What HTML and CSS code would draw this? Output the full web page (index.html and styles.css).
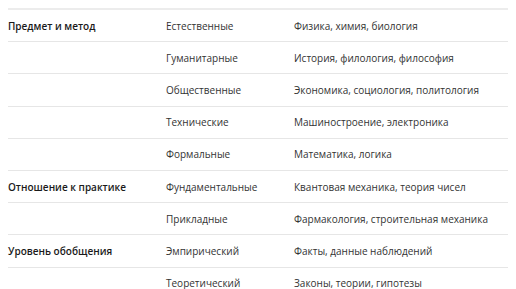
FILE: index.html
```html
<!DOCTYPE html>
<html lang="ru">
<head>
<meta charset="utf-8">
<link rel="stylesheet" href="styles.css">
</head>
<body>
<table class="sci">
  <tbody>
    <tr><th>Предмет и метод</th><td>Естественные</td><td>Физика, химия, биология</td></tr>
    <tr><th></th><td>Гуманитарные</td><td>История, филология, философия</td></tr>
    <tr><th></th><td>Общественные</td><td>Экономика, социология, политология</td></tr>
    <tr><th></th><td>Технические</td><td>Машиностроение, электроника</td></tr>
    <tr><th></th><td>Формальные</td><td>Математика, логика</td></tr>
    <tr><th>Отношение к практике</th><td>Фундаментальные</td><td>Квантовая механика, теория чисел</td></tr>
    <tr><th></th><td>Прикладные</td><td>Фармакология, строительная механика</td></tr>
    <tr><th>Уровень обобщения</th><td>Эмпирический</td><td>Факты, данные наблюдений</td></tr>
    <tr><th></th><td>Теоретический</td><td>Законы, теории, гипотезы</td></tr>
  </tbody>
</table>
</body>
</html>
```
FILE: styles.css
```css
html, body {
  margin: 0;
  background: #fff;
}
body {
  padding: 8px;
  font-family: "Open Sans", "Noto Sans", sans-serif;
  font-size: 10px;
  color: #333;
}
.sci {
  width: 500px;
  border-collapse: collapse;
  table-layout: fixed;
  border-top: 2px solid #ececec;
}
.sci tr {
  border-bottom: 1px solid #e6e6e6;
}
.sci th, .sci td {
  height: 31.2px;
  padding: 0;
  text-align: left;
  vertical-align: middle;
  white-space: nowrap;
}
.sci th {
  width: 158px;
  font-weight: 600;
  font-size: 10px;
  color: #1a1a1a;
}
.sci td:nth-child(2) {
  width: 128px;
}
```
